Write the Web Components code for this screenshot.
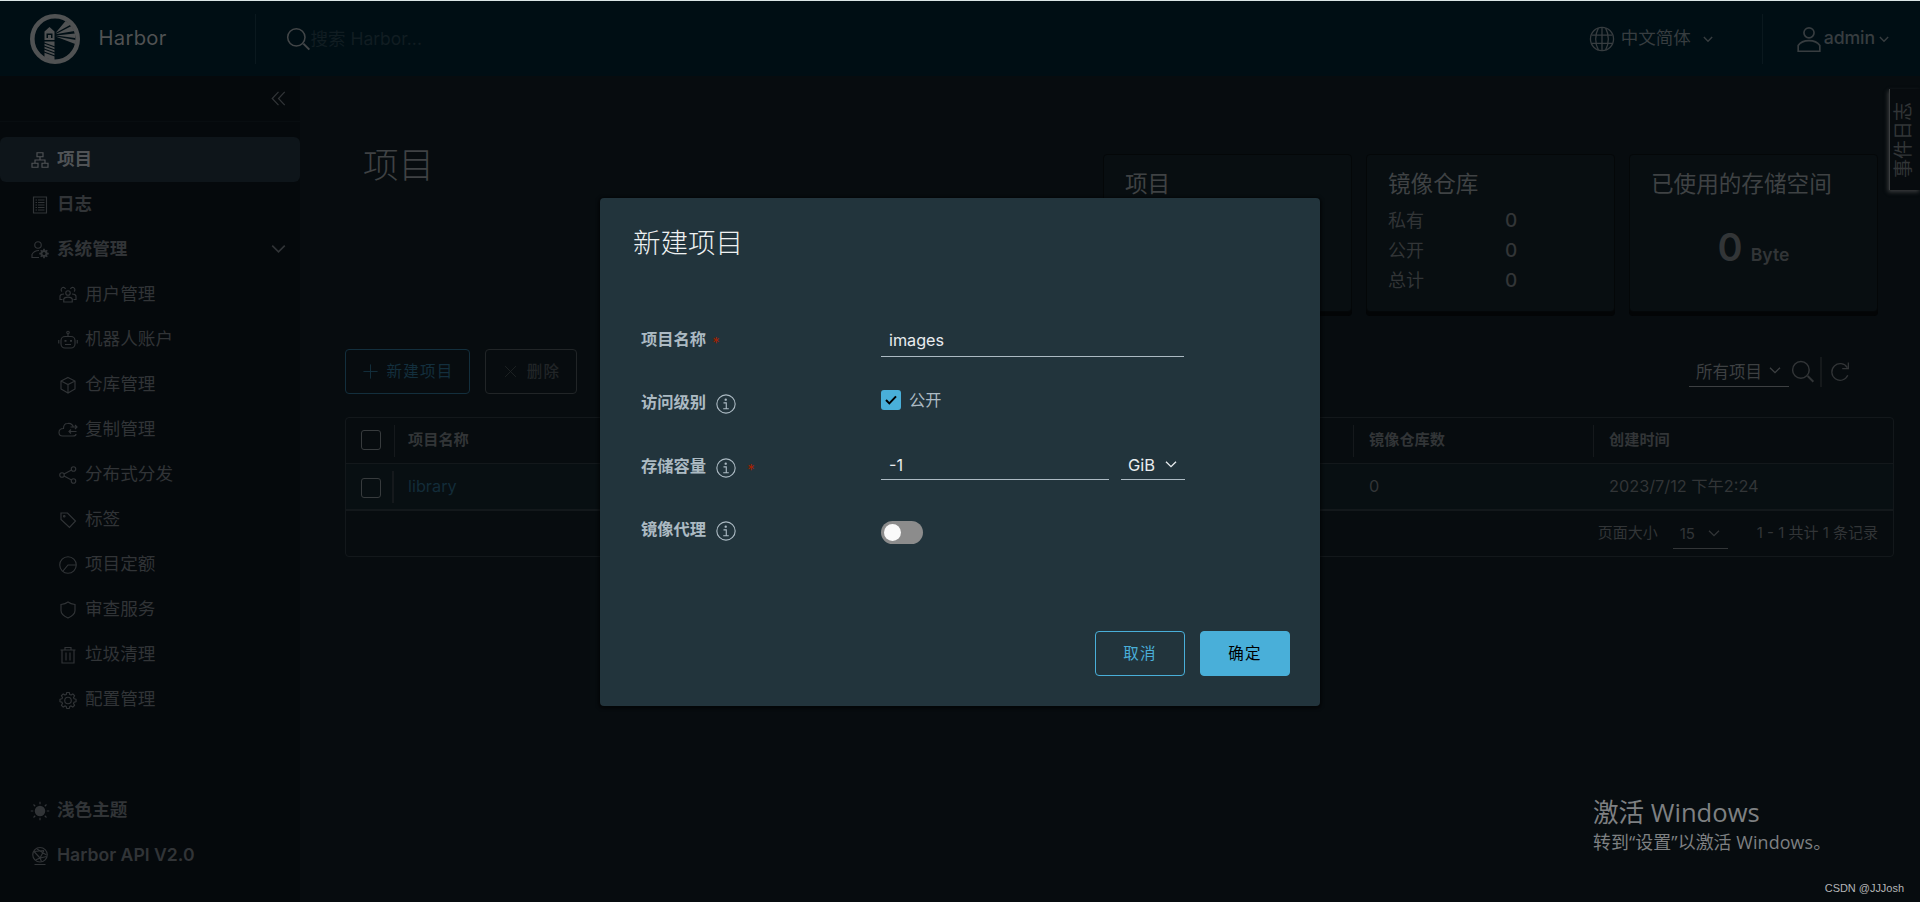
<!DOCTYPE html>
<html lang="zh-CN">
<head>
<meta charset="utf-8">
<title>Harbor</title>
<style>
  html, body {
    margin: 0;
    height: 100%;
    overflow: hidden;
    background: #070c0f;
    color: #323537;
    font-family: Inter, "Noto Sans CJK SC", sans-serif;
  }
</style>
</head>
<body>
<harbor-app></harbor-app>
<script>
(() => {
  // all icons share a 36x36 grid
  const gear = 'M15.4 3h5.2l.9 4 2.6 1.1 3.5-2.2 3.6 3.6-2.2 3.5 1.1 2.6 4 .9v4.9l-4 .9-1.1 2.6 2.2 3.6-3.6 3.6-3.5-2.3-2.6 1.1-.9 4.1h-5.2l-.9-4.1-2.6-1.1-3.5 2.3-3.6-3.6 2.2-3.6L5.9 22.300l-4-.9v-4.9l4-.9L7 13 4.800 9.500l3.600-3.600 3.500 2.200L14.500 7z'
  const icons = {
    organization: '<path d="M12 3.500h12v8H12zM2 24.500h12v8H2zM22 24.500h12v8H22zM18 11.500v6.500M8 24v-6h20v6"/>',
    log: '<path d="M5 2h26v32H5zM9 8h3M14 8h13M9 13h3M14 13h13M9 18h3M14 18h13M9 23h3M14 23h13M9 28h3M14 28h13"/>',
    admin: '<circle cx="14" cy="8" r="6.500"/><path d="M16 33H2v-6c3-6 8-8 14-8"/><circle cx="26" cy="25" r="5" stroke-width="4"/><path stroke-width="3.500" d="M26 15.500v19M16.500 25h19M19.500 18.500l13 13M32.500 18.500l-13 13"/><circle cx="26" cy="25" r="3" fill="#05090c" stroke="none"/>',
    users: '<circle cx="18" cy="14" r="4.500"/><path d="M9.500 32v-6c2-5 15-5 17 0v6zM7 27H2v-7c1-3 4-4 8-4M29 27h5v-7c-1-3-4-4-8-4M6 11a4.500 4.500 0 1 1 7-5M23 6a4.500 4.500 0 1 1 7 5"/>',
    robot: '<rect x="4" y="11" width="28" height="23" rx="8"/><circle cx="18" cy="3" r="2.500"/><path d="M18 6v5M-.5 18v7M36.500 18v7M12 27h12"/><path stroke-width="3.500" d="M11 19.500h4M22 19.500h4"/>',
    cube: '<path d="M18 3l14 7v16l-14 8L4 26V10zM4 10l14 7 14-7M18 17v16"/>',
    cloud: '<path d="M29 13c-2-7-7-9-12-8-5 0-8 4-8 10-6 0-9 3-9 8 0 4 3 7 7 7h21c4 0 6-2 6-4M23 12h12M32 8l4 4-4 4M35 21H20M24 17l-4 4 4 4"/>',
    share: '<circle cx="6" cy="18" r="4.500"/><circle cx="29" cy="6" r="4.500"/><circle cx="29" cy="30" r="4.500"/><path d="M10 16l15-8M10 20l15 8"/>',
    tag: '<path d="M4 4h13l16 16-12 13L4 17z"/><circle cx="10.500" cy="10.500" r="1.500"/>',
    quota: '<circle cx="18" cy="18" r="16.500"/><path d="M34 18H18L8 30"/>',
    shield: '<path d="M18 2c5 4 9 4.500 14 5v12c0 7-7 12-14 15C11 31 4 26 4 19V7c5-.5 9-1 14-5z"/>',
    trash: '<path d="M3 8h30M12 7V3h12v4M6 8v26h24V8M14 13v16M22 13v16"/>',
    cog: '<path stroke-linejoin="round" d="' + gear + '"/><circle cx="18" cy="19" r="6.500"/>',
    sun: '<circle cx="18" cy="18" r="10.500" fill="currentColor" stroke="none"/><path d="M18-.5v5M18 31.500v5M-.5 18h5M31.500 18h5M5 5l3.500 3.500M27.500 27.500L31 31M31 5l-3.500 3.500M8.500 27.500L5 31"/>',
    api: '<circle cx="18" cy="15.500" r="14.500"/><path d="M7 35h22M6 9l20-2M6 9l12 13 13-3M26 7l-8 15-9 4M12 4l19 12M18 22l3 7"/>',
    globe: '<circle cx="18" cy="18" r="16"/><path d="M4 12.500h28M4 24h28M18 2v32M13 3C8 12 8 24 13 33M23 3c5 9 5 21 0 30"/>',
    user: '<circle cx="18" cy="9.500" r="7"/><path d="M3 35v-8c6-9 24-9 30 0v8z"/>',
    search: '<circle cx="15.500" cy="15.500" r="13"/><path stroke-width="3" d="M26 25l9 9"/>',
    refresh: '<path d="M32 24A15 15 0 1 1 31 10M33 1v11H22"/>',
    chevron: '<path d="M3 11l15 15 15-15"/>',
    collapse: '<path d="M18 2L3 18l15 16M33 2L18 18l15 16"/>',
    plus: '<path d="M18 1v34M1 18h34"/>',
    times: '<path d="M3 3l30 30M33 3L3 33"/>',
    info: '<circle cx="18" cy="18" r="16.500"/><circle cx="17.500" cy="10.200" r="2.100" fill="currentColor" stroke="none"/><path d="M13.500 16h5v10.500M13 26.500h10"/>',
    check: '<path d="M3 18l10 10L33 7"/>'
  }

  class HarborIcon extends HTMLElement {
    connectedCallback() {
      const size = this.getAttribute('size') || 18
      const stroke = this.getAttribute('stroke') || 2.3
      this.attachShadow({ mode: 'open' }).innerHTML = `
      <style>
        :host { display: block; flex: none; line-height: 0; }
        svg { fill: none; stroke: currentColor; overflow: visible; }
      </style>
      <svg width="${size}" height="${size}" viewBox="0 0 36 36" stroke-width="${stroke}">${icons[this.getAttribute('name')]}</svg>
      `
    }
  }
  customElements.define('harbor-icon', HarborIcon)

  class HarborLogo extends HTMLElement {
    constructor() {
      super()
      this.attachShadow({ mode: 'open' }).innerHTML = `
      <style>
        :host { display: block; line-height: 0; color: #505253; }
      </style>
      <svg width="50" height="50" viewBox="0 0 50 50" fill="currentColor">
        <circle cx="25" cy="25" r="22.700" fill="none" stroke="currentColor" stroke-width="4.600"/>
        <path d="M25.500 19L35.500 7l5.500 3.500zM25.500 20.200L41.500 12l3 5zM26 21.500l19-2v4.500zM25.500 22.500L46 26l-.8 4z"/>
        <path d="M19.500 13l5 4.500V26h-10v-8.500z"/>
        <path fill="#000e14" d="M16.500 19.500h6v4.500h-1.500v-3h-3v3h-1.500z"/>
        <path d="M14.500 27.500h10V47l-10-3.500z"/>
        <path stroke="#000e14" stroke-width="1.300" d="M14 29l11 4M14 32l11 4M14 35l11 4M14 38l11 4"/>
      </svg>
      `
    }
  }
  customElements.define('harbor-logo', HarborLogo)

  class HarborHeader extends HTMLElement {
    constructor() {
      super()
      this.attachShadow({ mode: 'open' }).innerHTML = `
      <style>
        :host {
          display: flex;
          align-items: center;
          height: 75px;
          border-top: 1px solid #dbe5e5;
          background: #000e14;
          color: #373d40;
          font-size: 17.500px;
          line-height: 24px;
          white-space: nowrap;
        }
        harbor-logo { margin-left: 30px; }
        .brand { width: 156px; margin: -1px 0 0 18.500px; font-size: 20.200px; letter-spacing: .3px; color: #505253; }
        .line { width: 1px; height: 50px; background: #0a181e; }
        .search { display: flex; align-items: center; gap: 1px; margin-left: 30px; flex: 1; color: #424648; }
        .search span { color: #111d22; }
        .lang { display: flex; align-items: center; margin-right: 49px; }
        .lang span { margin: -2px 12px 0 6px; }
        .user { display: flex; align-items: center; margin: 0 31px 0 33px; }
        .user span { margin: -2px 4px 0 2px; font-weight: 500; font-size: 17.700px; letter-spacing: -.1px; }
      </style>
      <harbor-logo></harbor-logo>
      <div class="brand">Harbor</div>
      <div class="line"></div>
      <div class="search"><harbor-icon name="search" size="24"></harbor-icon><span>搜索 Harbor...</span></div>
      <div class="lang"><harbor-icon name="globe" size="26" stroke="1.800"></harbor-icon><span>中文简体</span><harbor-icon name="chevron" size="10" stroke="5"></harbor-icon></div>
      <div class="line"></div>
      <div class="user"><harbor-icon name="user" size="26"></harbor-icon><span>admin</span><harbor-icon name="chevron" size="10" stroke="5"></harbor-icon></div>
      `
    }
  }
  customElements.define('harbor-header', HarborHeader)

  class NavItem extends HTMLElement {
    connectedCallback() {
      const more = this.hasAttribute('open') ? '<harbor-icon class="more" name="chevron" size="15" stroke="4"></harbor-icon>' : ''
      this.attachShadow({ mode: 'open' }).innerHTML = `
      <style>
        :host {
          display: flex;
          align-items: center;
          box-sizing: border-box;
          height: 45px;
          padding: 0 14px 0 31px;
          border-radius: 6px;
          font-size: 17.600px;
          font-weight: 600;
          line-height: 24px;
          white-space: nowrap;
        }
        :host([active]) { background: #0e151a; color: #505356; }
        :host([sub]) { padding-left: 59px; font-weight: 400; }
        harbor-icon { margin-top: 1px; }
        .more { margin-top: -2px; }
        span { margin: -2px 0 0 8px; flex: 1; }
      </style>
      <harbor-icon name="${this.getAttribute('icon')}"></harbor-icon>
      <span><slot></slot></span>${more}
      `
    }
  }
  customElements.define('nav-item', NavItem)

  const systemMenu = [
    ['users', '用户管理'],
    ['robot', '机器人账户'],
    ['cube', '仓库管理'],
    ['cloud', '复制管理'],
    ['share', '分布式分发'],
    ['tag', '标签'],
    ['quota', '项目定额'],
    ['shield', '审查服务'],
    ['trash', '垃圾清理'],
    ['cog', '配置管理']
  ]

  class HarborSidebar extends HTMLElement {
    constructor() {
      super()
      this.attachShadow({ mode: 'open' }).innerHTML = `
      <style>
        :host {
          display: flex;
          flex-direction: column;
          width: 300px;
          flex: none;
          background: #05090c;
          color: #313437;
        }
        .toggle {
          display: flex;
          justify-content: flex-end;
          align-items: center;
          height: 45px;
          padding-right: 14px;
          border-bottom: 1px solid #080d10;
          margin-bottom: 15px;
        }
        .toggle harbor-icon { margin-top: -1px; }
        .bottom { margin-top: auto; padding-bottom: 24px; }
      </style>
      <div class="toggle"><harbor-icon name="collapse" size="15" stroke="3"></harbor-icon></div>
      <nav-item icon="organization" active>项目</nav-item>
      <nav-item icon="log">日志</nav-item>
      <nav-item icon="admin" open>系统管理</nav-item>
      ${systemMenu.map(([icon, text]) => `<nav-item sub icon="${icon}">${text}</nav-item>`).join('')}
      <div class="bottom">
        <nav-item icon="sun">浅色主题</nav-item>
        <nav-item icon="api">Harbor API V2.0</nav-item>
      </div>
      `
    }
  }
  customElements.define('harbor-sidebar', HarborSidebar)

  class StatCard extends HTMLElement {
    connectedCallback() {
      this.attachShadow({ mode: 'open' }).innerHTML = `
      <style>
        :host {
          display: block;
          box-sizing: border-box;
          width: 249px;
          height: 158px;
          padding: 13px 21px;
          border: 1px solid #040708;
          border-radius: 4px;
          background: #080e11;
          box-shadow: 0 4px 0 #030506;
        }
        h4 { margin: 0 0 7px; font-size: 22.600px; font-weight: 400; line-height: 32px; color: #3f4244; white-space: nowrap; }
      </style>
      <h4>${this.getAttribute('label')}</h4>
      <slot></slot>
      `
    }
  }
  customElements.define('stat-card', StatCard)

  class StatRow extends HTMLElement {
    connectedCallback() {
      this.attachShadow({ mode: 'open' }).innerHTML = `
      <style>
        :host { display: flex; height: 30px; line-height: 28px; font-size: 18px; }
        span { width: 117px; }
        b { font-weight: 500; font-size: 19px; }
      </style>
      <span>${this.getAttribute('label')}</span><b><slot></slot></b>
      `
    }
  }
  customElements.define('stat-row', StatRow)

  class HarborButton extends HTMLElement {
    constructor() {
      super()
      this.attachShadow({ mode: 'open' }).innerHTML = `
      <style>
        :host {
          display: flex;
          align-items: center;
          justify-content: center;
          box-sizing: border-box;
          height: 45px;
          border: 1px solid currentColor;
          border-radius: 4px;
          font-size: 15.500px;
          line-height: 22px;
          letter-spacing: 1.300px;
          white-space: nowrap;
        }
      </style>
      <slot></slot>
      `
    }
  }
  customElements.define('harbor-button', HarborButton)

  class HarborSelect extends HTMLElement {
    constructor() {
      super()
      this.attachShadow({ mode: 'open' }).innerHTML = `
      <style>
        :host {
          display: flex;
          align-items: center;
          justify-content: space-between;
          box-sizing: border-box;
          padding: 0 8px 0 7px;
          border-bottom: 1px solid currentColor;
          white-space: nowrap;
        }
        harbor-icon { margin-top: -2px; }
      </style>
      <slot></slot><harbor-icon name="chevron" size="12" stroke="4"></harbor-icon>
      `
    }
  }
  customElements.define('harbor-select', HarborSelect)

  class ProjectGrid extends HTMLElement {
    constructor() {
      super()
      this.attachShadow({ mode: 'open' }).innerHTML = `
      <style>
        :host {
          display: block;
          box-sizing: border-box;
          width: 1549px;
          height: 140px;
          margin-top: 23px;
          border: 1px solid #13181b;
          border-radius: 4px;
          font-size: 15.200px;
          white-space: nowrap;
        }
        .row { display: grid; grid-template-columns: 48px 959px 240px 1fr; align-items: center; height: 45px; border-bottom: 1px solid #13181b; }
        .head { font-weight: 600; }
        .data { background: #080f12; border-bottom-width: 2px; font-size: 16.300px; }
        .cell { height: 32px; line-height: 30px; padding-left: 15px; border-left: 1px solid #15191c; }
        .data .cell { border-color: transparent; }
        .cell:nth-child(2) { padding-left: 13px; }
        .data .first { border-left: 2px solid #15191c; margin-left: -2px; color: #132c39; padding-left: 14px; }
        i { display: block; box-sizing: border-box; width: 20px; height: 20px; margin: -2px 0 0 15px; border: 1px solid #373b3d; border-radius: 3px; }
        .data i { margin-top: 3px; }
        .foot { display: flex; justify-content: flex-end; align-items: center; height: 45px; padding-right: 15px; font-size: 15px; line-height: 24px; }
        .foot span { margin-top: -2px; }
        harbor-select { width: 55px; height: 28px; margin: 2px 29px 0 15px; }
      </style>
      <div class="row head"><i></i><div class="cell">项目名称</div><div class="cell">镜像仓库数</div><div class="cell">创建时间</div></div>
      <div class="row data"><i></i><div class="cell first">library</div><div class="cell">0</div><div class="cell">2023/7/12 下午2:24</div></div>
      <div class="foot"><span>页面大小</span><harbor-select>15</harbor-select><span>1 - 1 共计 1 条记录</span></div>
      `
    }
  }
  customElements.define('project-grid', ProjectGrid)

  class ProjectPage extends HTMLElement {
    constructor() {
      super()
      this.attachShadow({ mode: 'open' }).innerHTML = `
      <style>
        :host { display: block; flex: 1; padding-left: 45px; }
        .top { display: flex; justify-content: space-between; height: 273px; padding-right: 42px; }
        h2 { margin: 64px 0 0 18px; font-size: 35.600px; font-weight: 300; line-height: 52px; color: #3f4244; }
        .stats { display: flex; gap: 14px; margin-top: 78px; }
        .size { display: flex; align-items: baseline; justify-content: center; gap: 8px; margin-top: 25px; line-height: 44px; font-weight: 600; font-size: 17.600px; }
        .size b { font-size: 38px; font-weight: 600; }
        .bar { display: flex; height: 45px; gap: 15px; }
        .add { width: 125px; color: #132f3d; gap: 8px; padding-left: 2px; }
        .del { width: 92px; color: #212527; gap: 10px; padding-left: 2px; font-weight: 500; }
        .filter { display: flex; align-items: center; margin: 0 70px 0 auto; }
        .filter harbor-select { width: 100px; height: 30px; font-size: 16.500px; margin: 0 2px 0 0; color: #3d4042; }
        .line { width: 2px; height: 30px; margin: 0 8px 0 6px; background: #15191b; }
      </style>
      <div class="top">
        <h2>项目</h2>
        <div class="stats">
          <stat-card label="项目">
            <stat-row label="私有">0</stat-row>
            <stat-row label="公开">1</stat-row>
            <stat-row label="总计">1</stat-row>
          </stat-card>
          <stat-card label="镜像仓库">
            <stat-row label="私有">0</stat-row>
            <stat-row label="公开">0</stat-row>
            <stat-row label="总计">0</stat-row>
          </stat-card>
          <stat-card label="已使用的存储空间">
            <div class="size"><b>0</b><span>Byte</span></div>
          </stat-card>
        </div>
      </div>
      <div class="bar">
        <harbor-button class="add"><harbor-icon name="plus" size="15"></harbor-icon>新建项目</harbor-button>
        <harbor-button class="del"><harbor-icon name="times" size="13"></harbor-icon>删除</harbor-button>
        <div class="filter">
          <harbor-select>所有项目</harbor-select>
          <harbor-icon name="search" size="23"></harbor-icon>
          <div class="line"></div>
          <harbor-icon name="refresh" size="20"></harbor-icon>
        </div>
      </div>
      <project-grid></project-grid>
      `
    }
  }
  customElements.define('project-page', ProjectPage)

  class EventTab extends HTMLElement {
    constructor() {
      super()
      this.attachShadow({ mode: 'open' }).innerHTML = `
      <style>
        :host {
          position: absolute;
          right: 0;
          top: 89px;
          display: flex;
          align-items: center;
          justify-content: center;
          box-sizing: border-box;
          width: 31px;
          height: 101px;
          padding: 1px 3px 0 0;
          border-left: 1px solid #3b3e3f;
          background: #070b0e;
          box-shadow: -1px 2px 4px #3a3c3d;
          font-size: 19px;
          line-height: 28px;
        }
        span { writing-mode: vertical-rl; transform: rotate(180deg); text-orientation: sideways; white-space: nowrap; }
      </style>
      <span>事件日志</span>
      `
    }
  }
  customElements.define('event-tab', EventTab)

  class FormRow extends HTMLElement {
    connectedCallback() {
      const info = this.hasAttribute('info') ? '<harbor-icon name="info" size="20" stroke="2"></harbor-icon>' : ''
      const star = this.hasAttribute('required') ? '<em>*</em>' : ''
      this.attachShadow({ mode: 'open' }).innerHTML = `
      <style>
        :host { display: flex; height: 63px; color: #acbac3; }
        .label { display: flex; align-items: center; width: 240px; height: 32px; font-size: 16.300px; font-weight: 600; line-height: 24px; white-space: nowrap; }
        .label span { margin-top: -2px; }
        harbor-icon { margin: 2px 0 0 10px; }
        em { margin: 5px 0 0 6px; font: 400 15px/20px Inter, sans-serif; color: #a32100; }
        harbor-icon + em { margin-left: 11px; }
      </style>
      <div class="label"><span>${this.getAttribute('label')}</span>${info}${star}</div>
      <slot></slot>
      `
    }
  }
  customElements.define('form-row', FormRow)

  class ProjectDialog extends HTMLElement {
    constructor() {
      super()
      this.attachShadow({ mode: 'open' }).innerHTML = `
      <style>
        :host { position: absolute; inset: 2px 0 0; display: grid; place-items: center; }
        .dialog {
          display: flex;
          flex-direction: column;
          box-sizing: border-box;
          width: 720px;
          height: 508px;
          padding: 25px 30px 30px;
          border-radius: 4px;
          background: #22343c;
          box-shadow: 0 1px 3px 2px rgba(0, 0, 0, .5);
        }
        h3 { margin: 0 0 61px 3px; font-size: 27.500px; font-weight: 300; line-height: 40px; color: #eef1f2; }
        form-row { margin-left: 11px; }
        form-row:nth-of-type(n+3) { position: relative; top: 1px; }
        .input { box-sizing: border-box; width: 303px; height: 33px; padding-left: 8px; border-bottom: 1px solid #acbac3; color: #e9ecef; font-size: 16.200px; line-height: 33px; }
        .number { width: 228px; height: 29px; margin-right: 12px; line-height: 28px; }
        harbor-select { width: 64px; height: 29px; color: #e9ecef; border-color: #acbac3; font-size: 16.500px; }
        .check { display: flex; gap: 8px; height: 26px; align-items: center; font-size: 16.200px; }
        .check i { display: grid; place-items: center; width: 20px; height: 20px; border-radius: 3px; background: #49afd9; color: #000; }
        .check span { margin-top: -2px; }
        .switch { box-sizing: border-box; width: 42px; height: 23px; margin-top: 7px; padding: 3px; border-radius: 12px; background: #8c8c8c; }
        .switch i { display: block; width: 17px; height: 17px; border-radius: 50%; background: #fafafa; }
        .actions { display: flex; justify-content: flex-end; gap: 15px; margin-top: auto; }
        harbor-button { width: 90px; color: #49afd9; }
        .ok { background: #49afd9; border-color: #49afd9; color: #000; }
      </style>
      <div class="dialog">
        <h3>新建项目</h3>
        <form-row label="项目名称" required><div class="input">images</div></form-row>
        <form-row label="访问级别" info>
          <div class="check"><i><harbor-icon name="check" size="12" stroke="6"></harbor-icon></i><span>公开</span></div>
        </form-row>
        <form-row label="存储容量" info required>
          <div class="input number">-1</div><harbor-select>GiB</harbor-select>
        </form-row>
        <form-row label="镜像代理" info><div class="switch"><i></i></div></form-row>
        <div class="actions">
          <harbor-button>取消</harbor-button>
          <harbor-button class="ok">确定</harbor-button>
        </div>
      </div>
      `
    }
  }
  customElements.define('project-dialog', ProjectDialog)

  class ScreenNotice extends HTMLElement {
    constructor() {
      super()
      this.attachShadow({ mode: 'open' }).innerHTML = `
      <style>
        :host {
          position: absolute;
          right: 16px;
          bottom: 5px;
          width: 311px;
          color: #7e8082;
          font-family: "Open Sans", "Noto Sans CJK SC", sans-serif;
          white-space: nowrap;
        }
        .big { font-size: 25.600px; line-height: 34px; }
        .small { font-size: 17.900px; line-height: 24px; letter-spacing: .1px; }
        .sign { margin-top: 25px; text-align: right; color: #b4b5b6; font: 11px/18px "Liberation Sans", sans-serif; letter-spacing: -.03px; }
      </style>
      <div class="big">激活 Windows</div>
      <div class="small">转到“设置”以激活 Windows。</div>
      <div class="sign">CSDN @JJJosh</div>
      `
    }
  }
  customElements.define('screen-notice', ScreenNotice)

  class HarborApp extends HTMLElement {
    constructor() {
      super()
      this.attachShadow({ mode: 'open' }).innerHTML = `
      <style>
        :host { display: flex; flex-direction: column; position: relative; height: 100vh; overflow: hidden; }
        main { display: flex; flex: 1; }
      </style>
      <harbor-header></harbor-header>
      <main>
        <harbor-sidebar></harbor-sidebar>
        <project-page></project-page>
      </main>
      <event-tab></event-tab>
      <project-dialog></project-dialog>
      <screen-notice></screen-notice>
      `
    }
  }
  customElements.define('harbor-app', HarborApp)
})()
</script>
</body>
</html>
